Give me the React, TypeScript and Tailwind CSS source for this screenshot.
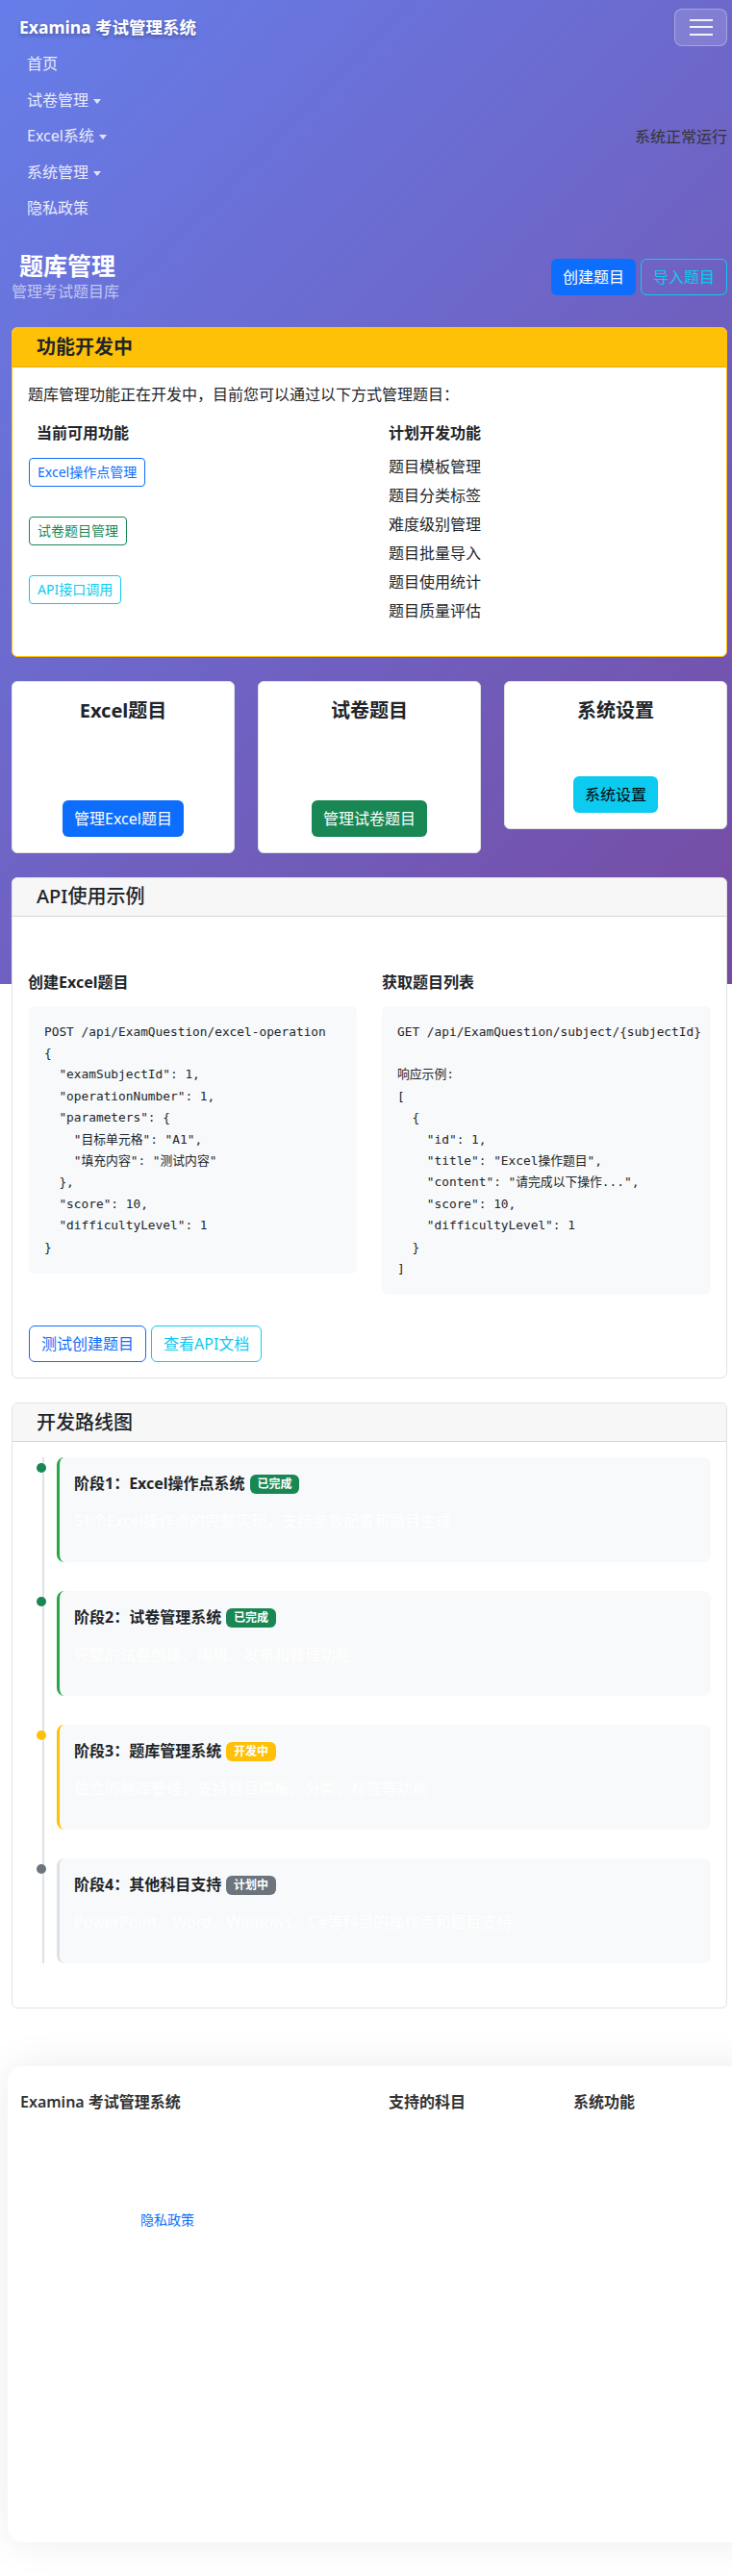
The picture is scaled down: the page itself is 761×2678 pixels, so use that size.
import React from 'react';

const navItems = [
  { label: '首页', dropdown: false },
  { label: '试卷管理', dropdown: true },
  { label: 'Excel系统', dropdown: true },
  { label: '系统管理', dropdown: true },
  { label: '隐私政策', dropdown: false },
];

const plannedFeatures = ['题目模板管理', '题目分类标签', '难度级别管理', '题目批量导入', '题目使用统计', '题目质量评估'];

const createCode = `POST /api/ExamQuestion/excel-operation
{
  "examSubjectId": 1,
  "operationNumber": 1,
  "parameters": {
    "目标单元格": "A1",
    "填充内容": "测试内容"
  },
  "score": 10,
  "difficultyLevel": 1
}`;

const listCode = `GET /api/ExamQuestion/subject/{subjectId}

响应示例:
[
  {
    "id": 1,
    "title": "Excel操作题目",
    "content": "请完成以下操作...",
    "score": 10,
    "difficultyLevel": 1
  }
]`;

// 路线图阶段
const stages = [
  {
    title: '阶段1：Excel操作点系统',
    badge: '已完成',
    desc: '51个Excel操作点的完整实现，支持参数配置和题目生成',
    border: 'border-l-[#28a745]',
    dot: 'bg-[#198754]',
    badgeBg: 'bg-[#198754]',
  },
  {
    title: '阶段2：试卷管理系统',
    badge: '已完成',
    desc: '完整的试卷创建、编辑、发布和管理功能',
    border: 'border-l-[#28a745]',
    dot: 'bg-[#198754]',
    badgeBg: 'bg-[#198754]',
  },
  {
    title: '阶段3：题库管理系统',
    badge: '开发中',
    desc: '独立的题库管理，支持题目模板、分类、标签等功能',
    border: 'border-l-[#ffc107]',
    dot: 'bg-[#ffc107]',
    badgeBg: 'bg-[#ffc107]',
  },
  {
    title: '阶段4：其他科目支持',
    badge: '计划中',
    desc: 'PowerPoint、Word、Windows、C#等科目的操作点和题目支持',
    border: 'border-l-[#dee2e6]',
    dot: 'bg-[#6c757d]',
    badgeBg: 'bg-[#6c757d]',
  },
];

const Caret = () => (
  <span className="ml-[5px] inline-block align-middle border-x-[4.5px] border-x-transparent border-t-[5px] border-t-white/80" />
);

export default function App() {
  return (
    <div className="min-h-[2678px] bg-white bg-[linear-gradient(135deg,#667eea_0%,#764ba2_100%)] bg-no-repeat bg-[length:100%_1023px] font-['Noto_Sans','Noto_Sans_CJK_SC',sans-serif] text-[#212529] text-base">
      {/* 导航栏 */}
      <nav className="pl-5 pr-[5px] pt-2">
        <div className="flex items-center justify-between">
          <span className="text-[17.5px] font-bold text-white leading-[40px] [text-shadow:0_2px_4px_rgba(0,0,0,0.3)]">
            Examina 考试管理系统
          </span>
          <button className="w-[55px] h-[39px] rounded-lg border border-white/30 bg-white/15 flex flex-col items-center justify-center gap-[5.5px]">
            <span className="block w-6 h-[2px] bg-white/90" />
            <span className="block w-6 h-[2px] bg-white/90" />
            <span className="block w-6 h-[2px] bg-white/90" />
          </button>
        </div>
        <div className="flex items-center justify-between pl-2">
          <ul className="flex flex-col">
            {navItems.map((item) => (
              <li key={item.label} className="leading-[37.5px] text-white/85">
                {item.label}
                {item.dropdown && <Caret />}
              </li>
            ))}
          </ul>
          <span className="text-[#333]">系统正常运行</span>
        </div>
      </nav>

      <main className="pl-3 pr-[5px]">
        {/* 页面标题 */}
        <div className="flex items-center justify-between mt-[25px] mb-[25px]">
          <div>
            <h3 className="pl-2 text-[25px] leading-[30px] font-bold text-white">题库管理</h3>
            <p className="leading-6 text-white/60">管理考试题目库</p>
          </div>
          <div className="flex gap-[5px]">
            <button className="h-[38px] px-3 rounded-md bg-[#0d6efd] text-white">创建题目</button>
            <button className="h-[38px] px-3 rounded-md border border-[#0dcaf0] text-[#0dcaf0]">导入题目</button>
          </div>
        </div>

        {/* 功能开发中 */}
        <div className="rounded-md border border-[#ffc107] bg-white overflow-hidden mb-[25px]">
          <div className="h-[41px] flex items-center pl-[25px] bg-[#ffc107] border-b border-black/10">
            <h5 className="text-[20px] font-bold">功能开发中</h5>
          </div>
          <div className="p-4">
            <p className="leading-6 mb-4">题库管理功能正在开发中，目前您可以通过以下方式管理题目：</p>
            <div className="grid grid-cols-[375px_1fr]">
              <div>
                <h6 className="font-bold leading-6 mb-2 pl-[9px]">当前可用功能</h6>
                <div className="flex flex-col items-start gap-[31px] pt-[6px] pl-px">
                  <button className="h-[30px] px-2 rounded border border-[#0d6efd] text-[#0d6efd] text-sm">Excel操作点管理</button>
                  <button className="h-[30px] px-2 rounded border border-[#198754] text-[#198754] text-sm">试卷题目管理</button>
                  <button className="h-[30px] px-2 rounded border border-[#0dcaf0] text-[#0dcaf0] text-sm">API接口调用</button>
                </div>
              </div>
              <div>
                <h6 className="font-bold leading-6 mb-2">计划开发功能</h6>
                <ul className="mt-[4px] mb-[16px] leading-[30px]">
                  {plannedFeatures.map((f) => (
                    <li key={f}>{f}</li>
                  ))}
                </ul>
              </div>
            </div>
          </div>
        </div>

        {/* 快捷入口 */}
        <div className="grid grid-cols-3 gap-6 items-start mb-[25px]">
          <div className="rounded-md border border-[#dee2e6] bg-white p-4 flex flex-col items-center">
            <h5 className="text-[20px] leading-7 font-bold">Excel题目</h5>
            <div className="h-[79px]" />
            <button className="h-[38px] px-3 rounded-md bg-[#0d6efd] text-white">管理Excel题目</button>
          </div>
          <div className="rounded-md border border-[#dee2e6] bg-white p-4 flex flex-col items-center">
            <h5 className="text-[20px] leading-7 font-bold">试卷题目</h5>
            <div className="h-[79px]" />
            <button className="h-[38px] px-3 rounded-md bg-[#198754] text-white">管理试卷题目</button>
          </div>
          <div className="rounded-md border border-[#dee2e6] bg-white p-4 flex flex-col items-center">
            <h5 className="text-[20px] leading-7 font-bold">系统设置</h5>
            <div className="h-[54px]" />
            <button className="h-[38px] px-3 rounded-md bg-[#0dcaf0] text-black">系统设置</button>
          </div>
        </div>

        {/* API使用示例 */}
        <div className="rounded-md border border-[#dee2e6] bg-white overflow-hidden mb-[25px]">
          <div className="h-[40px] flex items-center pl-[25px] bg-[#f7f7f7] border-b border-[#d6d6d6]">
            <h5 className="text-[20px] font-medium">API使用示例</h5>
          </div>
          <div className="p-4">
            <div className="h-10" />
            <div className="grid grid-cols-2 gap-x-[26px] items-start">
              <div>
                <h6 className="font-bold leading-6 mb-[13px]">创建Excel题目</h6>
                <pre className="ml-px p-4 rounded-md bg-[#f8f9fa] font-['DejaVu_Sans_Mono','Noto_Sans_CJK_SC',monospace] text-[12.8px] leading-[22.4px] text-[#212529]">
                  {createCode}
                </pre>
              </div>
              <div>
                <h6 className="font-bold leading-6 mb-[13px]">获取题目列表</h6>
                <pre className="p-4 rounded-md bg-[#f8f9fa] font-['DejaVu_Sans_Mono','Noto_Sans_CJK_SC',monospace] text-[12.8px] leading-[22.4px] text-[#212529]">
                  {listCode}
                </pre>
              </div>
            </div>
            <div className="flex gap-[5px] mt-8 pl-px">
              <button className="h-[38px] px-3 rounded-md border border-[#0d6efd] text-[#0d6efd]">测试创建题目</button>
              <button className="h-[38px] px-3 rounded-md border border-[#0dcaf0] text-[#0dcaf0]">查看API文档</button>
            </div>
          </div>
        </div>

        {/* 开发路线图 */}
        <div className="rounded-md border border-[#dee2e6] bg-white overflow-hidden">
          <div className="h-[40px] flex items-center pl-[25px] bg-[#f7f7f7] border-b border-[#d6d6d6]">
            <h5 className="text-[20px] font-medium">开发路线图</h5>
          </div>
          <div className="p-4">
            <div className="ml-[15px] border-l-2 border-[#dee2e6] pl-[13px] flex flex-col gap-[30px] mb-[30px]">
              {stages.map((s) => (
                <div key={s.title} className={`relative rounded-lg bg-[#f8f9fa] border-l-[3px] ${s.border} px-[15px] pt-[15px] pb-[16px]`}>
                  <span className={`absolute left-[-24px] top-[6px] w-[10px] h-[10px] rounded-full ${s.dot}`} />
                  <h6 className="font-bold leading-6 mb-[15px]">
                    {s.title}
                    <span className={`ml-[5px] inline-block align-[1px] px-[7.8px] py-[4px] rounded-md text-[12px] leading-3 font-bold text-white ${s.badgeBg}`}>
                      {s.badge}
                    </span>
                  </h6>
                  <p className="leading-6 mb-[15px] text-white">{s.desc}</p>
                </div>
              ))}
            </div>
          </div>
        </div>
      </main>

      {/* 页脚 */}
      <div className="overflow-x-hidden pt-[60px] pb-[35px]">
        <footer className="ml-2 w-[790px] h-[495px] rounded-l-[15px] bg-white shadow-[0_0_40px_rgba(0,0,0,0.08)] pt-[25px] pl-[13px]">
          <div className="grid grid-cols-[383px_192px_1fr]">
            <div>
              <h5 className="font-semibold leading-6 text-[#333]">Examina 考试管理系统</h5>
              <a className="block mt-[100px] pl-[125px] text-sm leading-[21px] text-[#0d6efd]">隐私政策</a>
            </div>
            <h6 className="font-bold leading-6 text-[#333]">支持的科目</h6>
            <h6 className="font-bold leading-6 text-[#333]">系统功能</h6>
          </div>
        </footer>
      </div>
    </div>
  );
}
